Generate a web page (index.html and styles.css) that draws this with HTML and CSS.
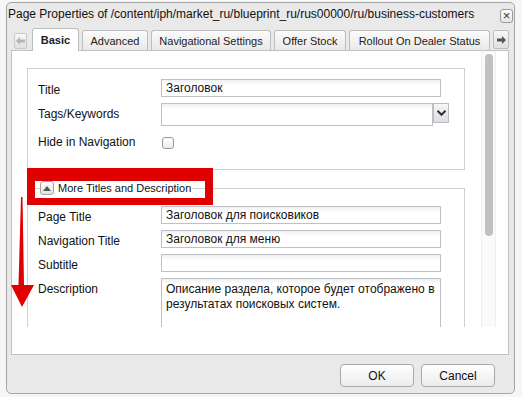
FILE: index.html
```html
<!DOCTYPE html>
<html lang="ru">

<head>
    <meta charset="UTF-8">
    <meta name="viewport" content="width=device-width, initial-scale=1.0">
    <title>Page Properties</title>
    <link rel="stylesheet" href="styles.css">
</head>

<body>
    <div class="window">
        <div class="header">
            <span class="title">Page Properties of /content/iph/market_ru/blueprint_ru/rus00000/ru/business-customers</span>
            <span class="close">&times;</span>
        </div>

        <div class="tabbar">
            <span class="scroller scroller-left">
                <svg width="9" height="8" viewBox="0 0 9 8"><path d="M0 4 L4 0 L4 2.5 L9 2.5 L9 5.5 L4 5.5 L4 8 Z" fill="#b4b4b4"/></svg>
            </span>
            <div class="tabs">
                <span class="tab tab-basic active">Basic</span>
                <span class="tab tab-advanced">Advanced</span>
                <span class="tab tab-nav">Navigational Settings</span>
                <span class="tab tab-offer">Offer Stock</span>
                <span class="tab tab-rollout">Rollout On Dealer Status</span>
            </div>
            <span class="scroller scroller-right">
                <svg width="9" height="8" viewBox="0 0 9 8"><path d="M9 4 L5 0 L5 2.5 L0 2.5 L0 5.5 L5 5.5 L5 8 Z" fill="#555"/></svg>
            </span>
        </div>

        <div class="panel">
            <div class="scroll">
                <div class="content">
                    <div class="fs">
                        <div class="row">
                            <label class="lbl">Title</label>
                            <div class="input">Заголовок</div>
                        </div>
                        <div class="row row-tags">
                            <div class="lbl">Tags/Keywords</div>
                            <div class="input input-tags"></div>
                            <span class="trigger">
                                <svg width="9" height="6" viewBox="0 0 9 6"><path d="M0.5 0.8 L4.5 4.8 L8.5 0.8" fill="none" stroke="#333" stroke-width="2"/></svg>
                            </span>
                        </div>
                        <div class="row row-check">
                            <div class="lbl">Hide in Navigation</div>
                            <span class="checkbox"></span>
                        </div>
                    </div>

                    <fieldset class="fs fs-more">
                        <legend class="legend">
                            <span class="collapse">
                                <svg width="8" height="5" viewBox="0 0 8 5"><path d="M0 5 L4 0 L8 5 Z" fill="#555"/></svg>
                            </span>
                            More Titles and Description
                        </legend>
                        <div class="row">
                            <div class="lbl">Page Title</div>
                            <div class="input">Заголовок для поисковиков</div>
                        </div>
                        <div class="row">
                            <div class="lbl">Navigation Title</div>
                            <div class="input">Заголовок для меню</div>
                        </div>
                        <div class="row">
                            <div class="lbl">Subtitle</div>
                            <div class="input"></div>
                        </div>
                        <div class="row">
                            <div class="lbl">Description</div>
                            <div class="input textarea">Описание раздела, которое будет отображено в<br>результатах поисковых систем.</div>
                        </div>
                    </fieldset>
                </div>
                <div class="vbar">
                    <div class="thumb"></div>
                </div>
            </div>
        </div>

        <div class="footer">
            <button class="btn">OK</button>
            <button class="btn">Cancel</button>
        </div>
    </div>

    <!-- annotation drawn over the screenshot -->
    <div class="highlight"></div>
    <svg class="arrow" width="40" height="120" viewBox="0 0 40 120">
        <path d="M21 0 L22.5 0 L24 88 L18.5 88 Z" fill="#e10000"/>
        <path d="M11 88 L34 88 L22 110 Z" fill="#e10000"/>
    </svg>
</body>

</html>
```

FILE: styles.css
```css
body {
    margin: 0;
    background: #f6f6f6;
    font-family: "Liberation Sans", Arial, sans-serif;
    color: #111;
    overflow: hidden;
}

.window {
    margin: 2px 0 0 6px;
    width: 507px;
    height: 390px;
    border: 1px solid #a5a5a5;
    border-radius: 5px;
    background: #e9e9e9;
    display: flex;
    flex-direction: column;
}

.header {
    height: 23px;
    display: flex;
    align-items: center;
    justify-content: space-between;
    padding-left: 1px;
}

.title {
    font-size: 12px;
    line-height: 23px;
    white-space: nowrap;
}

.close {
    width: 11px;
    height: 12px;
    margin: 2px 1px 0 0;
    border: 1px solid #9a9a9a;
    border-radius: 3px;
    background: linear-gradient(#fdfdfd, #e6e6e6);
    font-size: 13px;
    line-height: 11px;
    text-align: center;
    color: #333;
}

/* tabs */
.tabbar {
    height: 24px;
    display: flex;
    align-items: flex-end;
    position: relative;
    z-index: 1;
}

.scroller {
    width: 13px;
    height: 16px;
    border: 1px solid #c8c8c8;
    border-radius: 2px;
    background: linear-gradient(#f7f7f7, #e0e0e0);
    display: flex;
    align-items: center;
    justify-content: center;
    box-sizing: border-box;
}

.scroller-left {
    margin: 0 5px 1px 7px;
}

.scroller-right {
    width: 16px;
    height: 19px;
    margin: 0 5px 1px 3px;
    border-color: #bdbdbd;
}

.tabs {
    flex: 1;
    height: 25px;
    margin-bottom: -1px;
    display: flex;
    align-items: flex-end;
    gap: 3px;
    overflow: hidden;
}

.tab {
    flex: none;
    height: 20px;
    margin-bottom: 1px;
    border: 1px solid #bdbdbd;
    border-bottom: 0;
    border-radius: 3px 3px 0 0;
    background: linear-gradient(#fbfbfb, #e9e9e9);
    font-size: 11px;
    line-height: 20px;
    text-align: center;
    white-space: nowrap;
    box-sizing: border-box;
    color: #222;
}

.tab.active {
    height: 23px;
    margin-bottom: 0;
    background: #fff;
    font-weight: bold;
    line-height: 22px;
}

.tab-basic { width: 47px; }
.tab-advanced { width: 66px; }
.tab-nav { width: 120px; }
.tab-offer { width: 72px; }
.tab-rollout { width: 141px; }

/* body of the tab */
.panel {
    height: 305px;
    margin: 0 5px 0 4px;
    border: 1px solid #c2c2c2;
    background: #fff;
    box-sizing: border-box;
}

.scroll {
    height: 276px;
    display: flex;
}

.content {
    flex: 1;
    overflow: hidden;
    padding: 17px 0 0 15px;
}

.vbar {
    width: 15px;
    margin-right: 12px;
    border-left: 1px solid #efefef;
    border-right: 1px solid #efefef;
    background: #fafafa;
    box-sizing: border-box;
}

.thumb {
    width: 8px;
    height: 182px;
    margin: 3px 0 0 3px;
    border-radius: 4px;
    background: #c1c1c1;
}

.fs {
    width: 438px;
    margin: 0;
    border: 1px solid #d0d0d0;
    padding: 10px 0 20px 10px;
    box-sizing: border-box;
}

.fs-more {
    margin-top: 11px;
    padding: 11px 0 30px 10px;
    min-width: 0;
}

.legend {
    margin-left: 2px;
    padding: 0 1px 0 0;
    display: flex;
    align-items: center;
    gap: 4px;
    height: 14px;
    font-size: 11px;
    line-height: 14px;
    background: #fff;
}

.collapse {
    width: 14px;
    height: 14px;
    border: 1px solid #a4a4a4;
    border-radius: 3px;
    background: linear-gradient(#fdfdfd, #e3e3e3);
    display: flex;
    align-items: center;
    justify-content: center;
    box-sizing: border-box;
}

.row {
    display: flex;
    margin-bottom: 6px;
    font-size: 12px;
    line-height: 14px;
}

.row:last-child {
    margin-bottom: 0;
}

.lbl {
    width: 123px;
    flex: none;
    padding-top: 4px;
}

.input {
    width: 280px;
    height: 18px;
    border: 1px solid #bfc1c6;
    padding: 1px 4px;
    background: linear-gradient(#eef1f2, #fff 5px);
    box-sizing: border-box;
    white-space: nowrap;
    overflow: hidden;
}

.row-tags {
    margin-bottom: 5px;
}

.input-tags {
    width: 272px;
    height: 23px;
}

.trigger {
    width: 16px;
    height: 20px;
    border: 1px solid #b9bcc4;
    background: linear-gradient(#f6f6f6, #dedede);
    display: flex;
    align-items: center;
    justify-content: center;
    box-sizing: border-box;
}

.checkbox {
    width: 12px;
    height: 12px;
    margin: 6px 0 0 1px;
    border: 1px solid #9a9a9a;
    border-radius: 3px;
    background: linear-gradient(#fff, #ececec);
    box-sizing: border-box;
}

.textarea {
    height: 80px;
    padding: 3px 4px;
    line-height: 15px;
    white-space: normal;
}

/* buttons */
.footer {
    flex: 1;
    display: flex;
    justify-content: flex-end;
    gap: 7px;
    padding: 9px 19px 0 0;
}

.btn {
    width: 74px;
    height: 23px;
    border: 1px solid #a9a9a9;
    border-radius: 4px;
    background: linear-gradient(#fefefe, #ececec);
    font-family: "Liberation Sans", Arial, sans-serif;
    font-size: 12px;
    color: #111;
    padding: 0;
}

/* red annotation */
.highlight {
    position: absolute;
    left: 27px;
    top: 168px;
    width: 186px;
    height: 37px;
    border-style: solid;
    border-color: #e10000;
    border-width: 13px 8px 7px 8px;
    box-sizing: border-box;
}

.arrow {
    position: absolute;
    left: 0;
    top: 197px;
}
```
